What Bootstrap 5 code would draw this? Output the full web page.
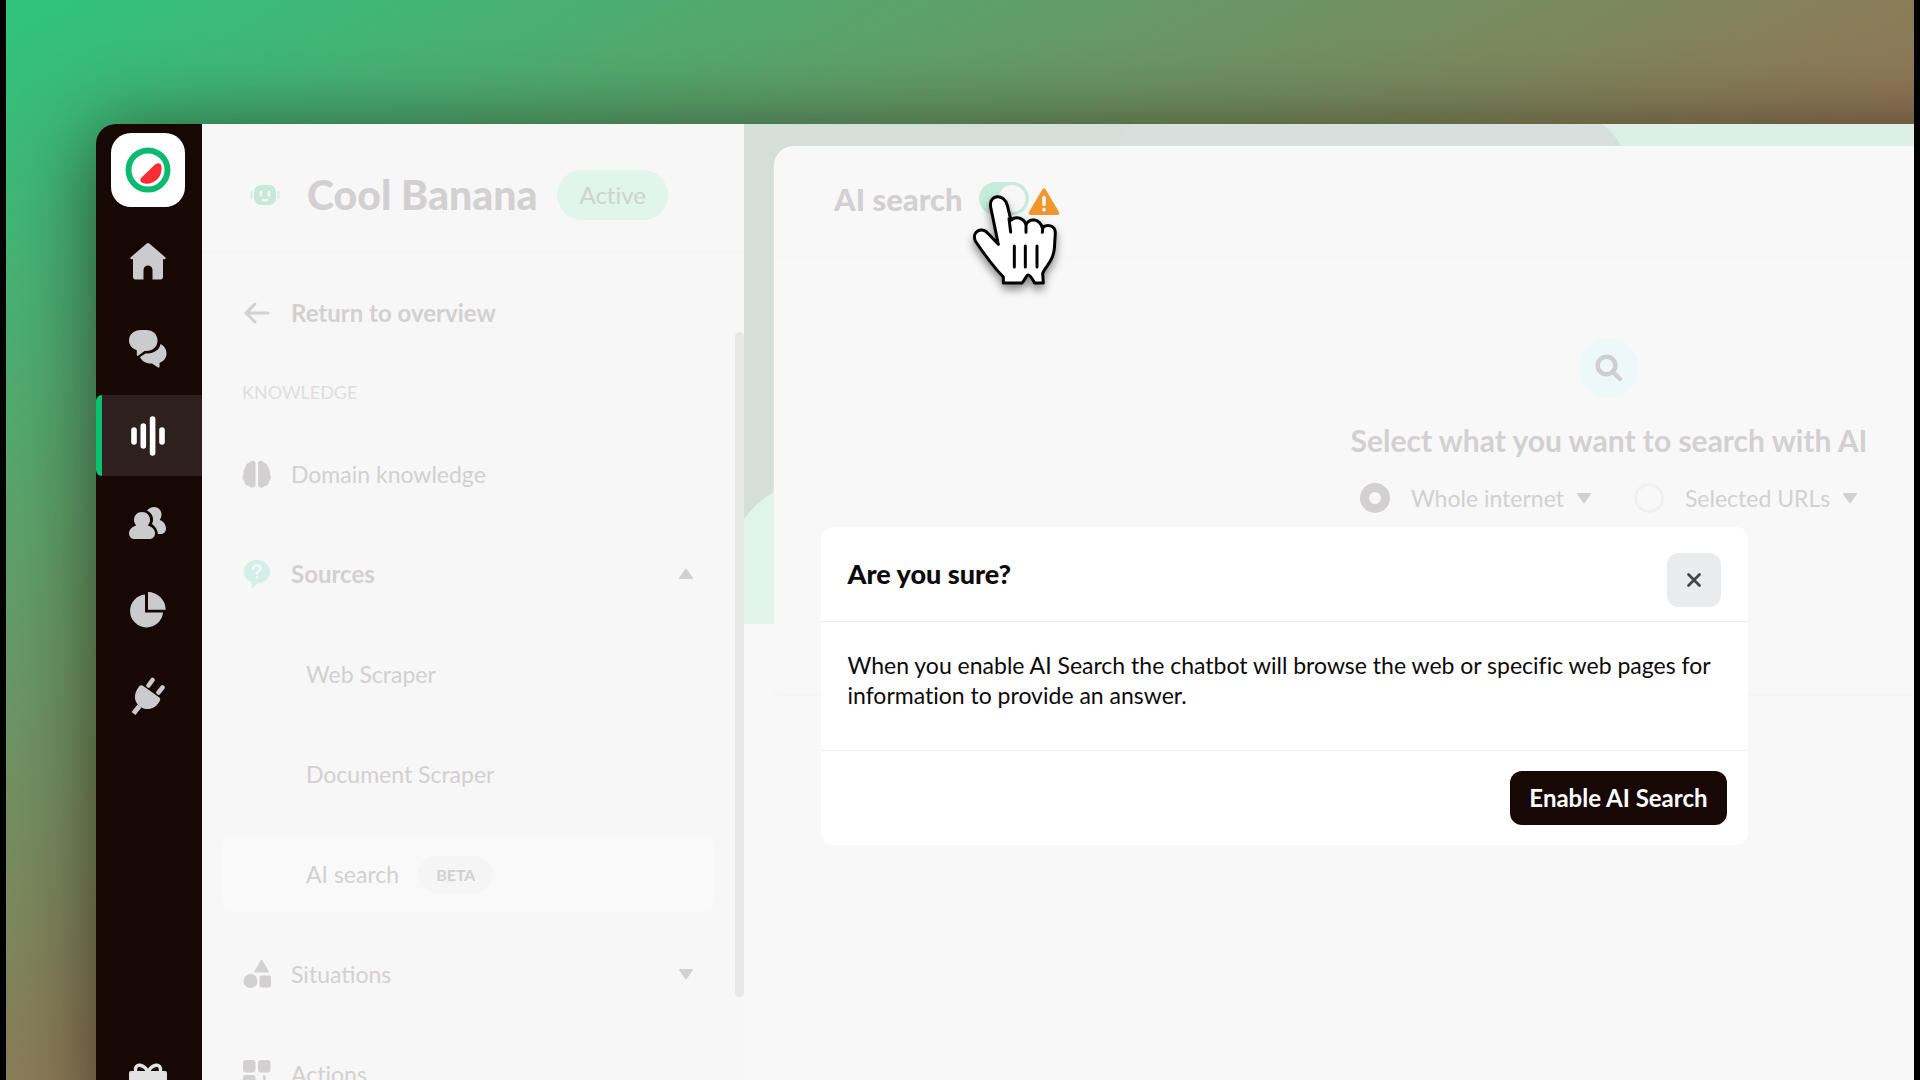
<!DOCTYPE html>
<html lang="en">
<head>
<meta charset="utf-8">
<meta name="viewport" content="width=device-width, initial-scale=1">
<title>Cool Banana – AI search</title>
<link href="https://cdn.jsdelivr.net/npm/bootstrap@5.3.0/dist/css/bootstrap.min.css" rel="stylesheet">
<style>
  :root { --ink: #170806; --faded: #d2d0d0; --panel: #f7f7f7; }
  body { font-family: Lato, "Noto Sans", sans-serif; font-size: 23px; line-height: 30px; font-variant-ligatures: no-common-ligatures; background: #000; color: var(--faded); }
  .stage { height: 100vh; border: solid #000; border-width: 0 6px; background: linear-gradient(to bottom right, #2fc47c, #8a7d58 50%, #c8384a); }
  /* The app window runs past the right and bottom edges of the stage */
  .app-window { margin: 124px -558px 0 90px; min-height: calc(100vh - 124px); border-radius: 20px 0 0 0; box-shadow: 0 10px 80px rgba(20, 10, 0, .6); }
  .rail { width: 106px; background: var(--ink); border-radius: 20px 0 0 0; padding-top: 9px; color: #cbcbcd; }
  .rail-logo { width: 74px; height: 74px; border-radius: 20px; background: #fff; margin: 0 2px 14px 0; }
  .rail-item { width: 100%; height: 81px; margin-bottom: 6px; padding-right: 2px; color: inherit; }
  .rail-item.active { background: #2d201f; color: #fff; border-left: 6px solid #09c272; border-radius: 6px 0 0 6px; padding-right: 8px; }
  .rail-gift { margin: 320px 2px 0 0; color: #e2e2e2; }
  .side { width: 542px; background: var(--panel); }
  .side-head { height: 128px; padding: 14px 42px 0 48px; border-bottom: 1px solid #f3f3f3; }
  .side-head h1 { font-size: 41px; line-height: 48px; font-weight: 900; margin: 0 20px 0 27px; }
  .pill { font-size: 24px; line-height: 30px; font-weight: 400; padding: 10px 22px; background: #e0f5eb; color: #cdd4d0; }
  .side-body { padding: 23px 30px 0 20px; }
  .side-link { height: 76px; padding: 0 20px; margin-bottom: 24px; gap: 19px; border: 0; border-radius: 12px; color: var(--faded); background: transparent; text-decoration: none; text-align: left; }
  .side-link.fw-bold { font-size: 24px; }
  .side-link.sub { padding-left: 84px; }
  .side-link.current { background: #f9f9f9; }
  .side-link:first-child { margin-bottom: 29px; }
  .side-label { font-size: 18px; line-height: 24px; margin: 0 20px 32px; color: #dfdede; font-weight: 400; }
  .tag { font-size: 16px; line-height: 21px; font-weight: 700; padding: 8px 18px; background: #f5f5f5; color: var(--faded); }
  .thumb { right: 0; top: 208px; width: 9px; height: 665px; border-radius: 5px; background: #e7e7e7; }
  .workspace { background: #f8f8f8; padding: 22px 28px 0 30px; }
  .decor { left: 0; top: 0; width: 100%; height: 500px; }
  .panel-card { background: #f8f8f8; height: 548px; border-radius: 20px 20px 6px 6px; box-shadow: 0 1px 2px #f3f3f3; }
  .panel-head { height: 112px; padding: 0 60px 6px; border-bottom: 1px solid #f4f4f4; gap: 16px; }
  .panel-head h2 { font-size: 31px; line-height: 36px; font-weight: 900; }
  .panel-head .form-switch { min-height: 0; margin: 0; padding: 0; }
  .panel-head .form-check-input { width: 50px; height: 33px; margin: 0; border: 0; background-color: #c5ebdb; opacity: 1; --bs-form-switch-bg: none; background-image: radial-gradient(circle at 33px 50%, #f7f7f7 13px, transparent 14px); }
  .search-disc { width: 60px; height: 60px; background: #edf8f8; margin-top: 80px; }
  .prompt { font-size: 30px; line-height: 38px; font-weight: 700; margin: 23px 0 24px; }
  .scope { gap: 42px; }
  .scope .form-check { gap: 21px; padding: 0; margin: 0; }
  .scope .form-check-input { width: 30px; height: 30px; margin: 0; float: none; border: 3px solid #f0f0f0; background: transparent; }
  .scope .form-check-input:checked { border: 9px solid var(--faded); background: var(--panel); }
  .scope .form-check-label { display: flex; align-items: center; gap: 12px; }
  .confirm { display: block; position: absolute; overflow: visible; z-index: 5; color: #0c0a0a; }
  .confirm .modal-dialog { max-width: 927px; margin-top: 403px; }
  .confirm .modal-content { border: 0; border-radius: 12px; color: inherit; }
  .confirm .modal-header { height: 95px; padding: 12px 27px 0; border-color: #ececec; }
  .confirm .modal-title { font-size: 27px; line-height: 34px; font-weight: 900; margin-bottom: 12px; }
  .confirm .modal-body { padding: 28px 27px 40px; }
  .confirm .modal-footer { padding: 20px 21px; border-color: #ececec; }
  .confirm .modal-footer .btn { margin: 0; }
  .close-btn { width: 54px; height: 54px; border-radius: 12px; background: #eaebed; color: #444; }
  .go-btn { height: 54px; padding: 0 18px; border-radius: 12px; background: var(--ink); color: #fff; font-size: 24px; font-weight: 700; }
  /* Pointer and warning sign float above the faded page */
  .warn { left: 932px; top: 64px; z-index: 6; }
  .pointer { left: 874px; top: 68px; z-index: 7; filter: drop-shadow(0 5px 4px rgba(0, 0, 0, .45)); }
</style>
<script src="https://cdn.jsdelivr.net/npm/bootstrap@5.3.0/dist/js/bootstrap.bundle.min.js"></script>
</head>
<body>
<div class="stage overflow-hidden">
  <div class="app-window d-flex position-relative">

    <nav class="rail d-flex flex-column align-items-center flex-shrink-0" aria-label="Main">
      <a href="#" class="rail-logo d-flex align-items-center justify-content-center flex-shrink-0" aria-label="Workspace">
        <svg width="46" height="46" viewBox="0 0 46 46"><circle cx="23" cy="23" r="19.5" fill="none" stroke="#0cba6f" stroke-width="6"/><path d="M16.500 30.500 29 18.500c3-3 7-3 7.500 1 .5 6-1.500 10.500-5 13.500-4 3.500-9.500 4.500-13.500 3-3-1.200-3.500-3.500-1.500-5.500z" fill="#fb2c36"/></svg>
      </a>
      <a href="#" class="rail-item d-flex align-items-center justify-content-center flex-shrink-0" aria-label="Home">
        <svg width="36" height="37" viewBox="0 0 36 37" fill="currentColor"><path d="M16.700.6c.8-.7 1.800-.7 2.600 0L35 14c1.200 1.100.5 2.300-.7 2.300H33V34c0 1.500-1 2.500-2.500 2.500h-8V27c0-6-9-6-9 0v9.500h-8C4 36.500 3 35.500 3 34V16.300H1.700C.5 16.300-.2 15.100 1 14z"/></svg>
      </a>
      <a href="#" class="rail-item d-flex align-items-center justify-content-center flex-shrink-0" aria-label="Conversations">
        <svg width="38" height="38" viewBox="0 0 38 38" fill="currentColor"><path d="M12 0h5c7 0 11.500 4.500 11.500 10.500S24 21 17 21h-1.500l-6 4.500c-1 .8-1.800.3-1.700-1v-4.300C3.300 18.600 0 15.300 0 10.500 0 4.500 5 0 12 0z"/><path d="M31.500 14c3.700 1.800 6 5.200 6 9.500 0 4.500-2.800 7.800-7 9.300v3.700c0 1.200-.8 1.500-1.800.8L23 33.500c-6 .3-10-2-12-6.500l5.500-3.500h2C25.500 23 30.500 20 31.500 14z"/></svg>
      </a>
      <a href="#" class="rail-item active d-flex align-items-center justify-content-center flex-shrink-0" aria-label="Chatbots" aria-current="page">
        <svg width="34" height="40" viewBox="0 0 34 40" stroke="currentColor" stroke-width="5.600" stroke-linecap="round"><path d="M3 14v12M12.300 10v20M21.600 3v34M31 14v12"/></svg>
      </a>
      <a href="#" class="rail-item d-flex align-items-center justify-content-center flex-shrink-0" aria-label="Contacts">
        <svg width="38" height="32" viewBox="0 0 38 32" fill="currentColor"><path d="M18 3.500C20 1 22.500 0 25 0c4.500 0 7.500 3.200 7.500 7.500 0 2.200-.7 4-1.800 5.400 3.800 1.300 6.300 4.600 6.300 8.600 0 3-2 5.500-5 5.500h-3c-.5-4-2.500-7.500-6-10 2.500-5 .5-11-5-13.500z"/><path d="M13 5c4.700 0 8 3.400 8 7.800 0 2.500-.9 4.400-2.300 5.700 4.300 1.200 7.300 4.200 7.300 8 0 3.500-2.500 5.500-6 5.500H6c-3.500 0-6-2-6-5.500 0-3.800 3-6.800 7.300-8C5.900 17.200 5 15.300 5 12.800 5 8.400 8.300 5 13 5z" stroke="#170806" stroke-width="2" paint-order="stroke"/></svg>
      </a>
      <a href="#" class="rail-item d-flex align-items-center justify-content-center flex-shrink-0" aria-label="Analytics">
        <svg width="36" height="36" viewBox="0 0 36 36" fill="currentColor"><path d="M15 2.500V20.500H33A16.500 16.500 0 1 1 15 2.500z"/><path d="M18 0a18 18 0 0 1 17.700 17.700H18z"/></svg>
      </a>
      <a href="#" class="rail-item d-flex align-items-center justify-content-center flex-shrink-0" aria-label="Integrations">
        <svg width="36" height="40" viewBox="0 0 36 40" fill="currentColor"><g fill="none" stroke="currentColor" stroke-linecap="round"><path d="M22.500 3 18.500 8.500M32.500 10.500 28.500 15.500" stroke-width="4.500"/><path d="M9.500 29 3.500 36.500" stroke-width="5" stroke-linecap="butt"/></g><path d="M9 9.500c1-1.500 2.800-1.600 4.300-.5L29 20.200c1.500 1 1.500 2.500.6 4-3.600 7-11.600 9.800-18.100 6.300C4 26 2.500 18 9 9.500z"/></svg>
      </a>
      <a href="#" class="rail-gift" aria-label="What's new">
        <svg class="d-block" width="38" height="38" viewBox="0 0 38 38" fill="currentColor"><path d="M19 9C15 1 7 0 6.500 6 6.500 7.500 7 9 8 9M19 9C23 1 31 0 31.500 6c0 1.500-.5 3-1.500 3" fill="none" stroke="currentColor" stroke-width="3.500"/><path d="M2 8h34q2 0 2 2v7H0v-7q0-2 2-2zM2 20h34v16H2z"/></svg>
      </a>
    </nav>

    <aside class="side position-relative flex-shrink-0">
      <header class="side-head d-flex align-items-center">
        <svg class="flex-shrink-0" width="30" height="22" viewBox="0 0 30 22"><rect x="4" y="1" width="22" height="20" rx="7" fill="#c8e8da"/><path d="M1.500 8v6M28.500 8v6" stroke="#d5ede3" stroke-width="2" stroke-linecap="round"/><path d="M11 8v3M19 8v3M13 16q2 1 4 0" stroke="#f7f7f7" stroke-width="2.500" stroke-linecap="round" fill="none"/></svg>
        <h1 class="text-nowrap">Cool Banana</h1>
        <span class="badge rounded-pill pill">Active</span>
      </header>
      <nav class="side-body d-flex flex-column" aria-label="Chatbot settings">
        <a href="#" class="side-link d-flex align-items-center fw-bold">
          <svg width="30" height="24" viewBox="0 0 30 24" fill="none" stroke="currentColor" stroke-width="3" stroke-linecap="round" stroke-linejoin="round"><path d="M26 12H4M13 3 4 12l9 9"/></svg>Return to overview</a>
        <h2 class="side-label">KNOWLEDGE</h2>
        <a href="#" class="side-link d-flex align-items-center">
          <svg width="30" height="28" viewBox="0 0 30 28" fill="currentColor"><path d="M13.500 2.500v23c-1 2.500-5 3-6.500.5-3 0-4.500-2-4.500-4.500C0 19 .5 16 1.500 14.500 1 11.500 2 9 3.500 7.500 3.500 5 5 3 7.500 2.500 9 0 12.500 0 13.500 2.500zM16 2.500v23c1 2.500 5 3 6.500.5 3 0 4.500-2 4.500-4.500 2.500-2.500 2-5.500 1-7 .5-3-.5-5.500-2-7C26 5 24.500 3 22 2.500 20.500 0 17 0 16 2.500z"/></svg>Domain knowledge</a>
        <button type="button" class="side-link d-flex align-items-center fw-bold" aria-expanded="true">
          <svg width="30" height="30" viewBox="0 0 30 30"><path d="M15 1c7.500 0 13 5 13 11.500S22.500 24 16 24l-5.500 5c-.5.300-1 0-1-.5V23C4.500 21.500 2 17.500 2 12.500 2 6 7.500 1 15 1z" fill="#d2f0ea"/><path d="M11.500 9.500c.5-4 7-4 7 0 0 2.500-3.500 2.500-3.500 5M15 18.300v.2" fill="none" stroke="#f8f8f8" stroke-width="2.600" stroke-linecap="round"/></svg>
          <span class="flex-grow-1">Sources</span>
          <svg width="16" height="12" viewBox="0 0 16 12" fill="currentColor"><path d="M7 1.500q1-1.500 2 0l5.700 8q.8 1.500-.7 1.500H2q-1.500 0-.7-1.500z"/></svg></button>
        <a href="#" class="side-link sub d-flex align-items-center">Web Scraper</a>
        <a href="#" class="side-link sub d-flex align-items-center">Document Scraper</a>
        <a href="#" class="side-link sub current d-flex align-items-center" aria-current="page">AI search <span class="badge rounded-pill tag">BETA</span></a>
        <button type="button" class="side-link d-flex align-items-center" aria-expanded="false">
          <svg width="30" height="30" viewBox="0 0 30 30" fill="currentColor"><path d="M18.500 1.500q1-1.500 2 0l6 10.500q.7 1.500-.8 1.500H13.500q-1.500 0-.8-1.500z"/><circle cx="8.500" cy="22" r="7"/><rect x="17.500" y="16.500" width="11.500" height="12" rx="2"/></svg>
          <span class="flex-grow-1">Situations</span>
          <svg width="16" height="12" viewBox="0 0 16 12" fill="currentColor"><path d="M7 10.500q1 1.500 2 0l5.700-8q.8-1.500-.7-1.500H2Q.5 1 1.300 2.500z"/></svg></button>
        <a href="#" class="side-link d-flex align-items-center m-0">
          <svg width="30" height="28" viewBox="0 0 30 28" fill="currentColor"><rect x="1" width="12.500" height="12.500" rx="3"/><rect x="16" width="12.500" height="12.500" rx="3"/><rect x="1" y="15" width="12.500" height="12.500" rx="3"/><path d="M21 15.500h2.500v5h5V23h-5v4.500H21V23h-5v-2.500h5z"/></svg>Actions</a>
      </nav>
      <div class="thumb position-absolute"></div>
    </aside>

    <main class="workspace flex-grow-1 position-relative">
      <svg class="decor position-absolute" aria-hidden="true"><rect width="100%" height="500" fill="#d4dfda"/><path d="M388 0H870V40H360z" fill="#d8e0dd"/><path d="M858 0q12 8 20 24h1200V0z" fill="#dcf0e7"/><path d="M0 395Q12 378 30 368H60V500H0z" fill="#e1f5ed"/></svg>
      <section class="panel-card position-relative d-flex flex-column">
        <header class="panel-head d-flex align-items-center">
          <h2 class="m-0" id="ai-title">AI search</h2>
          <div class="form-check form-switch"><input class="form-check-input float-none d-block" type="checkbox" role="switch" checked aria-labelledby="ai-title"></div>
        </header>
        <div class="d-flex flex-column align-items-center">
          <div class="search-disc rounded-circle d-flex align-items-center justify-content-center">
            <svg width="28" height="28" viewBox="0 0 28 28" fill="none" stroke="#d0cece" stroke-linecap="round"><circle cx="11.500" cy="11.500" r="8.800" stroke-width="4.500"/><path d="m18.500 18.500 6.500 6.500" stroke-width="4.500"/></svg>
          </div>
          <h3 class="prompt">Select what you want to search with AI</h3>
          <div class="scope d-flex">
            <div class="form-check d-flex align-items-center"><input class="form-check-input" type="radio" name="scope" id="scope-all" checked><label class="form-check-label" for="scope-all">Whole internet <svg width="16" height="12" viewBox="0 0 16 12" fill="currentColor"><path d="M7 10.500q1 1.500 2 0l5.700-8q.8-1.500-.7-1.500H2Q.5 1 1.300 2.500z"/></svg></label></div>
            <div class="form-check d-flex align-items-center"><input class="form-check-input" type="radio" name="scope" id="scope-urls"><label class="form-check-label" for="scope-urls">Selected URLs <svg width="16" height="12" viewBox="0 0 16 12" fill="currentColor"><path d="M7 10.500q1 1.500 2 0l5.700-8q.8-1.500-.7-1.500H2Q.5 1 1.300 2.500z"/></svg></label></div>
          </div>
        </div>
      </section>
    </main>

    <div class="modal confirm" role="dialog" aria-labelledby="confirm-title">
      <div class="modal-dialog">
        <div class="modal-content">
          <div class="modal-header">
            <h2 class="modal-title" id="confirm-title">Are you sure?</h2>
            <button type="button" class="btn close-btn p-0 d-flex align-items-center justify-content-center" aria-label="Close"><svg width="16" height="16" viewBox="0 0 16 16" stroke="currentColor" stroke-width="2.800" stroke-linecap="round"><path d="m2.500 2.500 11 11M13.500 2.500l-11 11"/></svg></button>
          </div>
          <div class="modal-body">When you enable AI Search the chatbot will browse the web or specific web pages for information to provide an answer.</div>
          <div class="modal-footer"><button type="button" class="btn go-btn">Enable AI Search</button></div>
        </div>
      </div>
    </div>

    <svg class="warn position-absolute" width="32" height="28" viewBox="0 0 32 28" aria-hidden="true"><path d="M14.300 1.500q1.700-2.500 3.400 0L31 24q1 3-1.800 3H2.800Q0 27 1 24z" fill="#f0962c"/><path d="M16 9.500v7M16 21.400v.4" stroke="#fff" stroke-width="3.400" stroke-linecap="round"/></svg>
    <svg class="pointer position-absolute" width="90" height="100" viewBox="690 245 270 300" fill="#fff" stroke="#000" stroke-width="9" stroke-linejoin="round" stroke-linecap="round" aria-hidden="true"><path d="M775 402 752 290C745 252 793 248 802 285L813 330C824 317 850 320 858 342 870 322 898 324 907 352 920 340 946 344 946 368L943 415C940 455 915 468 908 490L910 518H884C877 505 869 492 864 494 859 495 854 510 846 518H790V500C768 478 735 435 706 392 694 362 726 348 745 370z"/><path d="M807 325 812 365M858 340V366M909 348 907 366M823 407V470M856 407V470M891 407V470" fill="none"/></svg>
  </div>
</div>
</body>
</html>
